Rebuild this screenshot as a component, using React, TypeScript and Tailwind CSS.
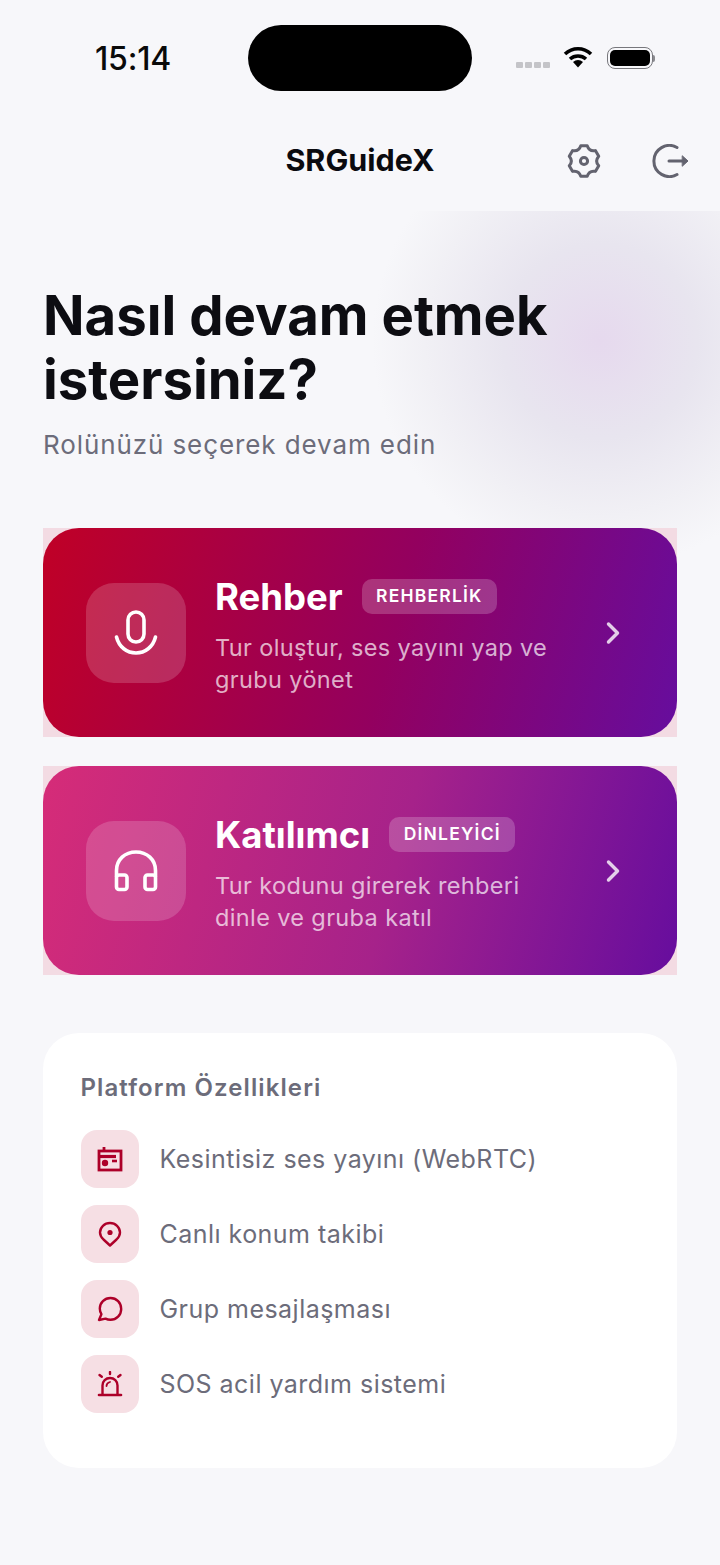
import { ChevronRight } from "lucide-react";

const font = { fontFamily: "Inter, 'Noto Sans', sans-serif" };

// six rounded teeth around a circle
function gearPath() {
  const at = (deg: number, r: number) => {
    const a = (deg * Math.PI) / 180;
    return `${(17 + r * Math.cos(a)).toFixed(2)} ${(17 + r * Math.sin(a)).toFixed(2)}`;
  };
  let d = "";
  for (let i = 0; i < 6; i++) {
    const a = -90 + i * 60;
    d += `${i === 0 ? "M" : "L"}${at(a - 12, 15.5)} L${at(a + 12, 15.5)} Q${at(a + 30, 10.5)} `;
    d += `${at(a + 48, 15.5)} `;
  }
  return d + "Z";
}

function GearIcon() {
  return (
    <svg width="34" height="34" viewBox="0 0 34 34" fill="none" stroke="#63636f" strokeWidth="3" strokeLinejoin="round">
      <path d={gearPath()} />
      <circle cx="17" cy="17" r="3.6" />
    </svg>
  );
}

function LogoutIcon() {
  return (
    <svg width="38" height="34" viewBox="0 0 38 34" fill="none" stroke="#63636f" strokeWidth="3" strokeLinecap="round" strokeLinejoin="round">
      <path d="M25 3.5 A15.5 15.5 0 1 0 25 30.5" />
      <path d="M17 17 H32" />
      <path d="M30.5 12 L36 17 L30.5 22 Z" fill="#63636f" stroke="#63636f" strokeWidth="1" />
    </svg>
  );
}

function WifiIcon() {
  return (
    <svg width="30" height="22" viewBox="0 0 30 22" fill="none">
      <path d="M2 8 C9.5 1 20.5 1 28 8" stroke="#000" strokeWidth="3.6" />
      <path d="M7 13 C11.5 9 18.5 9 23 13" stroke="#000" strokeWidth="3.6" />
      <path d="M10 16 C13 13.2 17 13.2 20 16 L15 21.5 Z" fill="#000" />
    </svg>
  );
}

function Battery() {
  return (
    <div className="flex items-center">
      <div className="w-[46px] h-[22px] rounded-[8px] border-[1.5px] border-[#77777c] p-[2px]">
        <div className="w-full h-full rounded-[5px] bg-black" />
      </div>
      <div className="w-[2px] h-[7px] rounded-r-full bg-[#8a8a8f]" />
    </div>
  );
}

function MicIcon() {
  return (
    <svg width="44" height="46" viewBox="0 0 44 46" fill="none" stroke="#fff" strokeWidth="3.6" strokeLinecap="round">
      <rect x="14" y="2" width="16" height="30" rx="8" />
      <path d="M2.5 27 C5 37 13 43 22 43 C31 43 39 37 41.5 27" />
    </svg>
  );
}

function HeadphonesIcon() {
  return (
    <svg width="44" height="42" viewBox="0 0 44 42" fill="none" stroke="#fff" strokeWidth="3.6" strokeLinejoin="round">
      <path d="M2.5 27 V20.5 C2.5 9.5 11 2 22 2 C33 2 41.5 9.5 41.5 20.5 V27" />
      <rect x="2.5" y="25" width="10.5" height="14.5" rx="2.5" />
      <rect x="31" y="25" width="10.5" height="14.5" rx="2.5" />
    </svg>
  );
}

function RadioIcon() {
  return (
    <svg width="26" height="26" viewBox="0 0 26 26" fill="none" stroke="#ad0029" strokeWidth="2.8">
      <path d="M7 1 V5" />
      <rect x="2" y="5" width="22" height="19" />
      <path d="M2 10.5 H19" strokeWidth="3.2" />
      <path d="M15 15 H20" strokeWidth="2.6" />
      <circle cx="8" cy="17" r="3.2" fill="#ad0029" stroke="none" />
    </svg>
  );
}

function PinIcon() {
  return (
    <svg width="24" height="26" viewBox="0 0 24 26" fill="none" stroke="#ad0029" strokeWidth="2.4" strokeLinejoin="round">
      <path d="M12 2 C6.5 2 2 6.2 2 11.5 C2 14.5 3.5 16.5 5.5 18.5 L12 24.5 L18.5 18.5 C20.5 16.5 22 14.5 22 11.5 C22 6.2 17.5 2 12 2 Z" />
      <circle cx="12" cy="11.5" r="2.6" fill="#ad0029" stroke="none" />
    </svg>
  );
}

function BubbleIcon() {
  return (
    <svg width="26" height="26" viewBox="0 0 26 26" fill="none" stroke="#ad0029" strokeWidth="2.4" strokeLinejoin="round">
      <path d="M13.5 2 C7.5 2 2.8 6.6 2.8 12.5 C2.8 14.6 3.4 16.6 4.4 18.2 L2 24 L8.5 22.6 C10 23.4 11.7 23.8 13.5 23.8 C19.5 23.8 24.2 19 24.2 12.9 C24.2 6.7 19.5 2 13.5 2 Z" />
    </svg>
  );
}

function SirenIcon() {
  return (
    <svg width="26" height="26" viewBox="0 0 26 26" fill="none" stroke="#ad0029" strokeWidth="2.4" strokeLinecap="round">
      <path d="M5.5 23 V14.5 C5.5 10.2 8.8 7 13 7 C17.2 7 20.5 10.2 20.5 14.5 V23" />
      <path d="M2 24 H24" strokeWidth="2.6" />
      <path d="M9.5 15 C9.5 13 11 11.5 13 11" strokeWidth="1.8" />
      <path d="M13 1 V3" />
      <path d="M2.5 4 L4.8 5.8" />
      <path d="M23.5 4 L21.2 5.8" />
    </svg>
  );
}

const roles = [
  {
    title: "Rehber",
    badge: "REHBERLİK",
    desc: ["Tur oluştur, ses yayını yap ve", "grubu yönet"],
    icon: <MicIcon />,
    gradient: "bg-[linear-gradient(105deg,#c00026_0%,#93005f_55%,#660d9e_100%)]",
  },
  {
    title: "Katılımcı",
    badge: "DİNLEYİCİ",
    desc: ["Tur kodunu girerek rehberi", "dinle ve gruba katıl"],
    icon: <HeadphonesIcon />,
    gradient: "bg-[linear-gradient(105deg,#d62c78_0%,#a6228a_55%,#660d9e_100%)]",
  },
];

const features = [
  { label: "Kesintisiz ses yayını (WebRTC)", icon: <RadioIcon /> },
  { label: "Canlı konum takibi", icon: <PinIcon /> },
  { label: "Grup mesajlaşması", icon: <BubbleIcon /> },
  { label: "SOS acil yardım sistemi", icon: <SirenIcon /> },
];

export default function App() {
  return (
    <div className="w-[720px] h-[1565px] overflow-hidden bg-[#f7f7fa]" style={font}>
      {/* Status bar */}
      <div className="h-[91px] pt-[25px] flex items-start">
        <div className="w-[248px] pl-[95px] pt-[14px] text-[32px] leading-[40px] font-medium text-[#0a0a0a] tracking-[-0.2px]">
          15:14
        </div>
        <div className="w-[224px] h-[66px] rounded-full bg-black" />
        <div className="flex-1 flex items-center pl-[44px] pt-[22px]">
          <div className="flex gap-[2.5px] mt-[14px]">
            <div className="w-[6.5px] h-[6.5px] rounded-[1px] bg-[#c4c4c8]" />
            <div className="w-[6.5px] h-[6.5px] rounded-[1px] bg-[#c4c4c8]" />
            <div className="w-[6.5px] h-[6.5px] rounded-[1px] bg-[#c4c4c8]" />
            <div className="w-[6.5px] h-[6.5px] rounded-[1px] bg-[#c4c4c8]" />
          </div>
          <div className="ml-[13px] -mt-[2px]">
            <WifiIcon />
          </div>
          <div className="ml-[14px]">
            <Battery />
          </div>
        </div>
      </div>

      {/* Header */}
      <div className="relative h-[120px] flex items-center justify-center pt-[18px]">
        <span className="text-[30.5px] font-bold text-[#0a0a0f]">SRGuideX</span>
        <div className="absolute left-[567px] top-[53px]">
          <GearIcon />
        </div>
        <div className="absolute left-[652px] top-[53px]">
          <LogoutIcon />
        </div>
      </div>

      {/* Main */}
      <div className="relative overflow-hidden h-[1354px]">
        <div className="absolute left-[370px] top-[-100px] w-[460px] h-[460px] rounded-full bg-[radial-gradient(circle,#e6d9ee_0%,#e8e5ef_30%,rgba(240,239,244,0.8)_55%,rgba(247,247,250,0)_70%)]" />
        <div className="relative px-[43px] pt-[72px]">
          <h1 className="text-[54.5px] leading-[64px] font-bold text-[#0d0d12]">
            Nasıl devam etmek
            <br />
            istersiniz?
          </h1>
          <p className="mt-[17px] text-[26px] leading-[34px] text-[#6c6c7a] tracking-[0.9px]">
            Rolünüzü seçerek devam edin
          </p>

          <div className="mt-[66px] flex flex-col gap-[29px]">
            {roles.map((role) => (
              <div key={role.title} className="bg-[#f3dbe3]">
                <div className={`h-[209px] rounded-[36px] flex items-center pl-[43px] pr-[46px] ${role.gradient}`}>
                  <div className="w-[100px] h-[100px] rounded-[28px] bg-white/[0.17] flex items-center justify-center shrink-0">
                    {role.icon}
                  </div>
                  <div className="ml-[29px] flex-1 mt-[5px]">
                    <div className="flex items-center gap-[19px]">
                      <span className="text-[36.5px] leading-[44px] font-bold text-white">{role.title}</span>
                      <span className="h-[35px] px-[14.5px] flex items-center rounded-[10px] bg-white/20 text-[17.5px] font-semibold tracking-[1.2px] text-white">
                        {role.badge}
                      </span>
                    </div>
                    <p className="mt-[13px] text-[23.5px] leading-[32px] text-white/70 tracking-[0.37px]">
                      {role.desc[0]}
                      <br />
                      {role.desc[1]}
                    </p>
                  </div>
                  <ChevronRight size={36} strokeWidth={2.3} className="text-white/80 shrink-0" />
                </div>
              </div>
            ))}
          </div>

          <div className="mt-[58px] h-[435px] rounded-[36px] bg-white pl-[37.5px] pt-[38px]">
            <div className="text-[24px] leading-[34px] font-semibold text-[#6c6c7a] tracking-[1.1px]">
              Platform Özellikleri
            </div>
            <div className="mt-[25px] flex flex-col gap-[17px]">
              {features.map((item) => (
                <div key={item.label} className="flex items-center gap-[21px]">
                  <div className="w-[58px] h-[58px] rounded-[16px] bg-[#f6dfe4] flex items-center justify-center">
                    {item.icon}
                  </div>
                  <span className="text-[25px] leading-[32px] text-[#6c6c7a] tracking-[0.47px]">{item.label}</span>
                </div>
              ))}
            </div>
          </div>
        </div>
      </div>
    </div>
  );
}
